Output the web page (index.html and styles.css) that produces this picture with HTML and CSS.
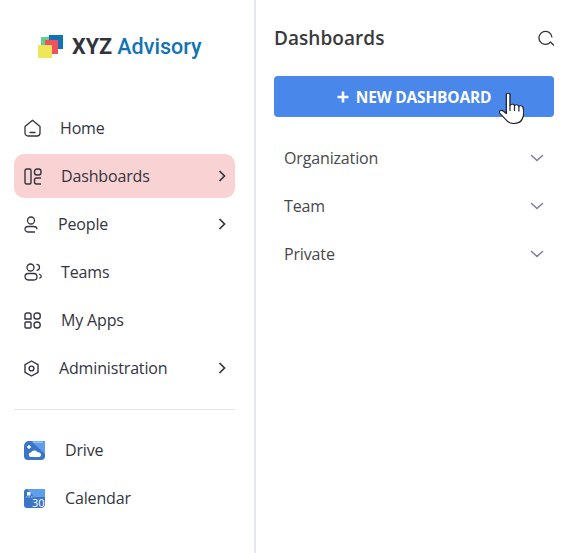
FILE: index.html
```html
<!DOCTYPE html>
<html lang="en">
<head>
  <meta charset="UTF-8">
  <meta name="viewport" content="width=device-width, initial-scale=1.0">
  <title>XYZ Advisory - Dashboards</title>
  <link rel="stylesheet" href="styles.css">
</head>
<body>
  <div class="app">
    <aside class="sidebar">
      <div class="brand">
        <svg class="brand-logo" width="26" height="24" viewBox="0 0 26 24">
          <rect x="3" y="3" width="15" height="15" fill="#62d08c"/>
          <rect x="11" y="1" width="14" height="14" fill="#1273b4"/>
          <rect x="7" y="6" width="13" height="14" fill="#f2505c"/>
          <rect x="0" y="11" width="14" height="13" fill="#efe65a"/>
        </svg>
        <span class="brand-name"><b>XYZ</b> <span class="brand-accent">Advisory</span></span>
      </div>

      <nav class="nav">
        <a class="nav-item">
          <svg class="nav-icon" width="17" height="18" viewBox="0 0 17 18" fill="none" stroke="#33343f" stroke-width="1.3">
            <path d="M1 7.5 8.5 1.2 16 7.5V14a3 3 0 0 1-3 3H4a3 3 0 0 1-3-3Z" stroke-linejoin="round"/>
            <path d="M6 13.5h5" stroke-linecap="round"/>
          </svg>
          <span>Home</span>
        </a>
        <a class="nav-item active">
          <svg class="nav-icon" width="18" height="17" viewBox="0 0 18 17" fill="none" stroke="#33343f" stroke-width="1.4">
            <rect x="1" y="1" width="6" height="15" rx="1.5"/>
            <rect x="10.5" y="1" width="6.5" height="6" rx="2.5"/>
            <path d="M17 10h-4.500a2 2 0 0 0-2 2v2a2 2 0 0 0 2 2H17"/>
          </svg>
          <span>Dashboards</span>
          <svg class="nav-arrow" width="8" height="12" viewBox="0 0 8 12" fill="none" stroke="#33343f" stroke-width="1.7"><path d="M1.500 1 6.500 6 1.500 11"/></svg>
        </a>
        <a class="nav-item">
          <svg class="nav-icon" width="15" height="17" viewBox="0 0 15 17" fill="none" stroke="#33343f" stroke-width="1.3">
            <circle cx="7" cy="4.500" r="3.500"/>
            <path d="M11 16H4.500C2.500 16 1 14.800 1 13.300S2.500 10.500 4.500 10.500h5c2 0 3.500 1 3.500 2.800"/>
          </svg>
          <span>People</span>
          <svg class="nav-arrow" width="8" height="12" viewBox="0 0 8 12" fill="none" stroke="#33343f" stroke-width="1.7"><path d="M1.500 1 6.500 6 1.500 11"/></svg>
        </a>
        <a class="nav-item">
          <svg class="nav-icon" width="18" height="18" viewBox="0 0 18 18" fill="none" stroke="#33343f" stroke-width="1.3">
            <circle cx="6.500" cy="4.500" r="3.500"/>
            <path d="M12.500 1.300a3 3 0 0 1 0 6"/>
            <rect x="1" y="10.500" width="12" height="6.500" rx="3.200"/>
            <path d="M15 11c1.500.5 2.300 1.300 2.300 2.300 0 .9-.7 1.600-2 2"/>
          </svg>
          <span>Teams</span>
        </a>
        <a class="nav-item">
          <svg class="nav-icon" width="18" height="17" viewBox="0 0 18 17" fill="none" stroke="#33343f" stroke-width="1.4">
            <path d="M1 7V3a2 2 0 0 1 2-2h2a2 2 0 0 1 2 2v4Z"/>
            <rect x="10" y="1" width="6.200" height="6" rx="2.500"/>
            <rect x="1" y="10" width="6" height="6" rx="1"/>
            <rect x="10" y="10" width="6.200" height="6" rx="3"/>
          </svg>
          <span>My Apps</span>
        </a>
        <a class="nav-item">
          <svg class="nav-icon" width="16" height="17" viewBox="0 0 16 17" fill="none" stroke="#33343f" stroke-width="1.4">
            <path d="M7.500 1 14 4.600V12.400L7.500 16 1 12.400V4.600Z" stroke-linejoin="round"/>
            <circle cx="7.500" cy="8.500" r="2.400"/>
          </svg>
          <span>Administration</span>
          <svg class="nav-arrow" width="8" height="12" viewBox="0 0 8 12" fill="none" stroke="#33343f" stroke-width="1.7"><path d="M1.500 1 6.500 6 1.500 11"/></svg>
        </a>
      </nav>

      <div class="nav-divider"></div>

      <nav class="nav">
        <a class="nav-item">
          <svg class="nav-icon" width="21" height="19" viewBox="0 0 21 19">
            <path d="M5 0h16v15a4 4 0 0 1-4 4H4a4 4 0 0 1-4-4V5a5 5 0 0 1 5-5Z" fill="#3b75c6"/>
            <path d="M7 0h14v13Z" fill="#5f9eea"/>
            <path d="M9 1.200h10" stroke="#b5d0f2" stroke-width="1"/>
            <path d="M7 16a2.200 2.200 0 0 1 0-4.400C8 9 12 8.600 13.500 11.200c2-.3 3.500.8 3.500 2.500S16 16 14.500 16Z" fill="#fff"/>
            <path d="M3 6h4M5 4v4" stroke="#fff" stroke-width="1.400"/>
          </svg>
          <span>Drive</span>
        </a>
        <a class="nav-item">
          <svg class="nav-icon" width="21" height="19" viewBox="0 0 21 19">
            <path d="M3 0h18v15a4 4 0 0 1-4 4H3a3 3 0 0 1-3-3V3a3 3 0 0 1 3-3Z" fill="#3b75c6"/>
            <path d="M3 0h18v8H10Z" fill="#5f9eea"/>
            <rect x="3" y="3" width="3.500" height="3.500" fill="#fff"/>
            <path d="M2 8h8" stroke="#b5d0f2" stroke-width="1" stroke-dasharray="1.500 1"/>
            <text class="cal-day" x="8" y="17.500">30</text>
          </svg>
          <span>Calendar</span>
        </a>
      </nav>
    </aside>

    <main class="panel">
      <header class="panel-head">
        <h1>Dashboards</h1>
        <svg width="16" height="16" viewBox="0 0 16 16" fill="none" stroke="#33343a" stroke-width="1.300">
          <path d="M12.300 12.200A6.500 6.500 0 1 1 14 7.500"/>
          <path d="M12.500 12 15.500 15" stroke-linecap="round"/>
        </svg>
      </header>

      <button class="new-btn">
        <svg width="12" height="12" viewBox="0 0 12 12"><path d="M6 .5v11M.5 6h11" stroke="#fff" stroke-width="2.600"/></svg>
        NEW DASHBOARD
        <svg class="cursor" width="25" height="31" viewBox="1 2 20.500 31" preserveAspectRatio="none">
          <path d="M7 3.500C7 1.800 10 1.800 10 3.500V14.500C10.500 12.800 13.500 12.800 13.700 14.800 14.200 13.300 17 13.300 17.300 15.500 17.800 14.300 20.500 14.500 20.800 16.800 21.500 20 21.300 25 20 28 19 31 16.500 32.500 13 32.500 10 32.500 8 31 6.500 28.500L1.500 22C.5 20.500 2.500 18.500 4.500 20L7 22.500Z" fill="#fff" stroke="#26262e" stroke-width="1.100" stroke-linejoin="round"/>
          <path d="M10 14.500V20M13.700 14.800V20M17.300 15.500V20.500" stroke="#26262e" stroke-width="1"/>
        </svg>
      </button>

      <ul class="groups">
        <li class="group">
          <span>Organization</span>
          <svg width="14" height="8" viewBox="0 0 14 8" fill="none" stroke="#7f8098" stroke-width="1.500"><path d="M1 1 7 6.500 13 1"/></svg>
        </li>
        <li class="group">
          <span>Team</span>
          <svg width="14" height="8" viewBox="0 0 14 8" fill="none" stroke="#7f8098" stroke-width="1.500"><path d="M1 1 7 6.500 13 1"/></svg>
        </li>
        <li class="group">
          <span>Private</span>
          <svg width="14" height="8" viewBox="0 0 14 8" fill="none" stroke="#7f8098" stroke-width="1.500"><path d="M1 1 7 6.500 13 1"/></svg>
        </li>
      </ul>
    </main>
  </div>
</body>
</html>
```

FILE: styles.css
```css
html, body {
  height: 100%;
}
body {
  margin: 0;
  background: #fff;
  color: #33343f;
  font-family: 'Open Sans', sans-serif;
  font-size: 16px;
  overflow: hidden;
}
.app {
  display: flex;
  height: 100%;
}
.sidebar {
  width: 256px;
  flex-shrink: 0;
  box-sizing: border-box;
  padding: 34px 19px 0 14px;
  border-right: 2px solid #e4e6f2;
}
.brand {
  display: flex;
  align-items: center;
  gap: 8px;
  height: 24px;
  padding-left: 24px;
  margin-bottom: 48px;
}
.brand-logo {
  flex-shrink: 0;
}
.brand-name {
  font-family: Roboto, sans-serif;
  font-size: 21.5px;
  font-weight: 500;
  white-space: nowrap;
}
.brand-name b {
  font-weight: 700;
  color: #33343a;
}
.brand-accent {
  color: #1273b4;
}
.nav {
  display: flex;
  flex-direction: column;
  gap: 4px;
}
.nav-item {
  display: flex;
  align-items: center;
  gap: 19px;
  height: 44px;
  padding: 0 10px;
  border-radius: 10px;
  line-height: 22px;
  letter-spacing: -0.15px;
}
.nav-item.active {
  background: #f9d3d3;
}
.nav-icon {
  flex-shrink: 0;
}
.nav-arrow {
  margin-left: auto;
  margin-right: -1px;
}
.nav-divider {
  height: 1px;
  margin: 19px 0 18px;
  background: #e4e6ea;
}
.nav-divider + .nav .nav-item {
  gap: 20px;
}
.cal-day {
  font-family: 'Open Sans', sans-serif;
  font-size: 11px;
  fill: #fff;
}
.panel {
  flex: 1;
  padding: 27px 12px 0 18px;
}
.panel-head {
  display: flex;
  align-items: center;
  justify-content: space-between;
  height: 22px;
}
.panel-head h1 {
  margin: 0;
  font-size: 19px;
  font-weight: 600;
  color: #3a3a3c;
  line-height: 22px;
  letter-spacing: 0.05px;
}
.new-btn {
  position: relative;
  display: flex;
  align-items: center;
  justify-content: center;
  gap: 7px;
  width: 100%;
  height: 41px;
  margin-top: 27px;
  padding: 0;
  border: none;
  border-radius: 4px;
  background: #4a87ea;
  color: #fff;
  font-family: 'Open Sans', sans-serif;
  font-size: 15.5px;
  font-weight: 700;
  letter-spacing: -0.2px;
}
.cursor {
  position: absolute;
  left: 225px;
  top: 17px;
}
.groups {
  list-style: none;
  margin: 17px 0 0;
  padding: 0;
}
.group {
  display: flex;
  align-items: center;
  justify-content: space-between;
  height: 48px;
  padding: 0 10px;
  color: #47484c;
  letter-spacing: -0.15px;
}
```
